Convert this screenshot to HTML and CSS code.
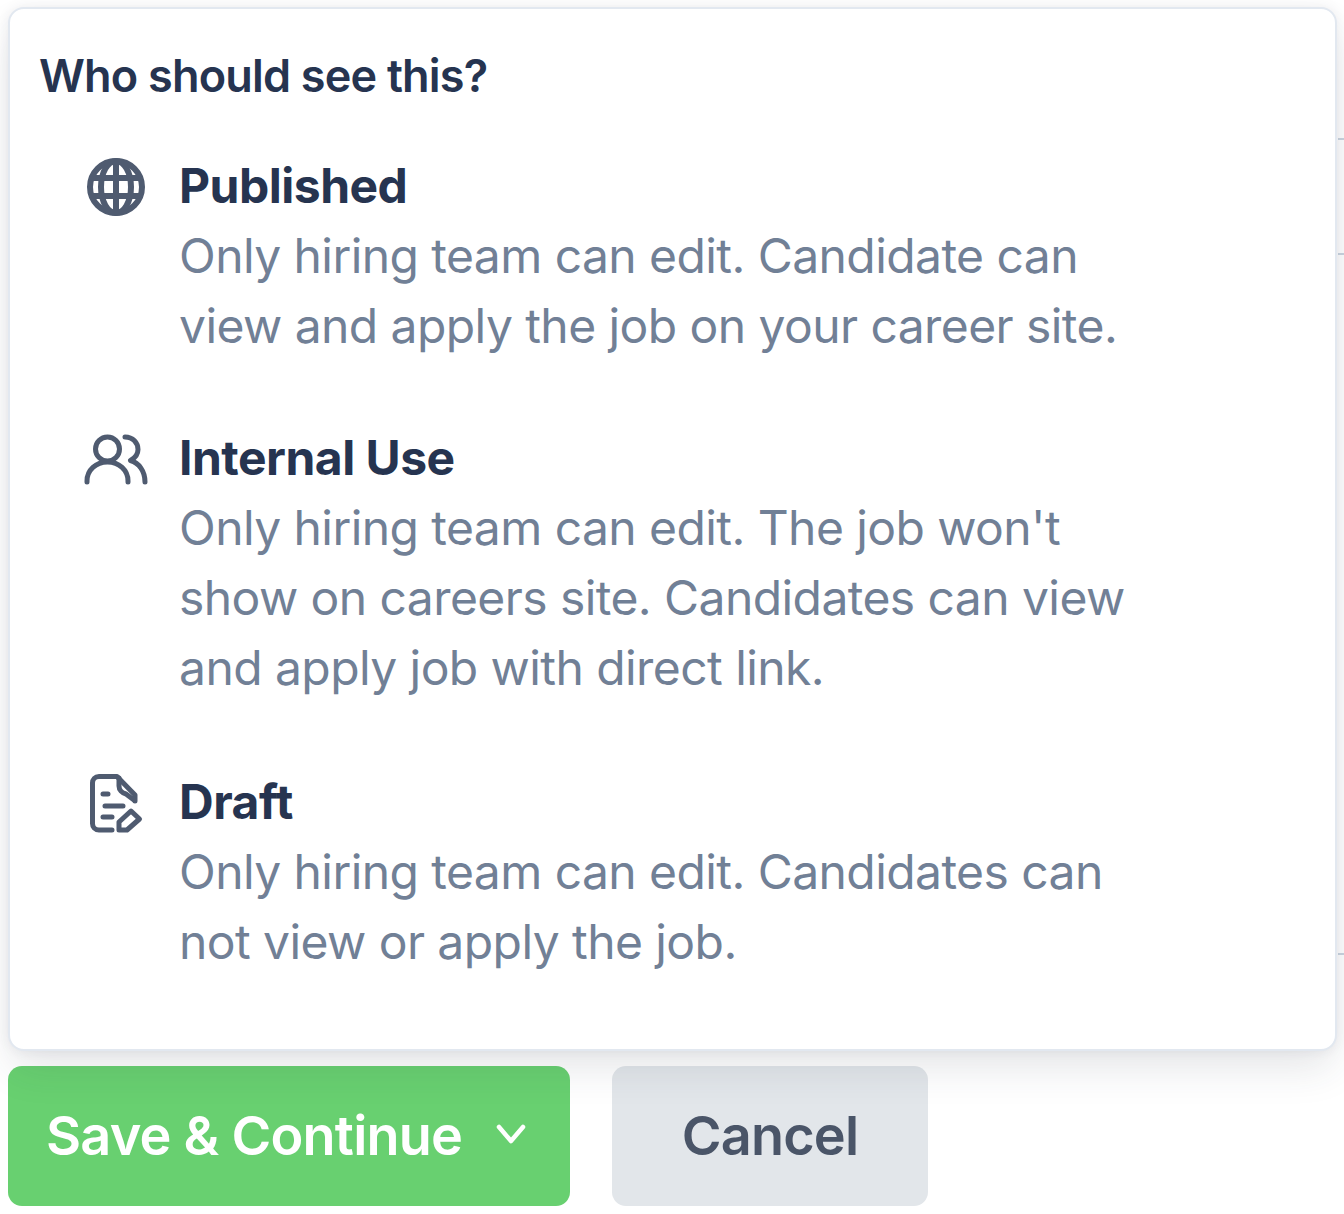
FILE: index.html
```html
<!DOCTYPE html>
<html lang="en">
<head>
    <meta charset="UTF-8">
    <meta name="viewport" content="width=device-width, initial-scale=1.0">
    <title>Who should see this?</title>
    <link rel="stylesheet" href="styles.css">
</head>
<body>
    <div class="top-row">
        <div class="card">
            <h1 class="card-title">Who should see this?</h1>

            <div class="option option-published">
                <svg class="option-icon" viewBox="0 0 68 68" fill="none" stroke="#4f5b70" stroke-width="6">
                    <circle cx="34" cy="34" r="26"/>
                    <ellipse cx="34" cy="34" rx="15" ry="26"/>
                    <path d="M10 25h48M10 43h48M34 8v52"/>
                </svg>
                <div class="option-text">
                    <h2 class="option-name">Published</h2>
                    <p class="option-desc">Only hiring team can edit. Candidate can<br>view and apply the job on your career site.</p>
                </div>
            </div>

            <div class="option option-internal">
                <svg class="option-icon" viewBox="0 0 68 68" fill="none" stroke="#4f5b70" stroke-width="5" stroke-linecap="round" stroke-linejoin="round">
                    <circle cx="25.500" cy="24" r="12"/>
                    <path d="M5 57v-1c0-11 9-19 20.500-19S46 45 46 56v1"/>
                    <path d="M43 12c8 0 13 6 13 12.500 0 4.500-3 8.500-7.500 11C57 38 63 46 63 57"/>
                </svg>
                <div class="option-text">
                    <h2 class="option-name">Internal Use</h2>
                    <p class="option-desc">Only hiring team can edit. The job won't<br>show on careers site. Candidates can view<br>and apply job with direct link.</p>
                </div>
            </div>

            <div class="option option-draft">
                <svg class="option-icon" viewBox="0 0 68 68" fill="none" stroke="#4f5b70" stroke-width="5" stroke-linecap="round" stroke-linejoin="round">
                    <path d="M30 61H17c-4 0-6.500-3-6.500-6.500V14c0-3.500 2.500-6.500 6.500-6.500h18L53 26v6"/>
                    <path d="M37 9v8c0 4 3 7 7 8l8 6"/>
                    <path d="M21 25h5M23 37h18M21 48h9"/>
                    <path d="M37 61v-8l12-11 8.500 8L45 61z"/>
                </svg>
                <div class="option-text">
                    <h2 class="option-name">Draft</h2>
                    <p class="option-desc">Only hiring team can edit. Candidates can<br>not view or apply the job.</p>
                </div>
            </div>
        </div>

        <!-- rows of the page behind the popover, only their ends show -->
        <div class="behind">
            <div class="behind-line line-1"></div>
            <div class="behind-line line-2"></div>
            <div class="behind-line line-3"></div>
        </div>
    </div>

    <div class="actions">
        <button class="btn btn-save">
            Save &amp; Continue
            <svg class="chevron" viewBox="0 0 32 24" fill="none" stroke="#fff" stroke-width="4.500" stroke-linecap="round" stroke-linejoin="round">
                <path d="M4 5l12 14L28 5"/>
            </svg>
        </button>
        <button class="btn btn-cancel">Cancel</button>
    </div>
</body>
</html>
```

FILE: styles.css
```css
* {
    box-sizing: border-box;
}
html, body {
    margin: 0;
    background: #fff;
}
body {
    font-family: Inter, "Liberation Sans", sans-serif;
    height: 1214px;
    overflow: hidden;
    padding-top: 7px;
}
.top-row {
    display: flex;
    padding-left: 8px;
    height: 1044px;
}
.card {
    position: relative;
    z-index: 2;
    width: 1329px;
    height: 1044px;
    flex: none;
    background: #fff;
    border: 2px solid #e2e8f0;
    border-radius: 16px;
    padding: 39px 0 0 29px;
    box-shadow: 0 20px 40px -4px rgba(45, 55, 72, 0.13), 0 0 12px rgba(45, 55, 72, 0.08);
}
.card-title {
    margin: 0;
    font-size: 45px;
    line-height: 56px;
    font-weight: 600;
    color: #263450;
    letter-spacing: -0.8px;
}
.option {
    display: flex;
    align-items: flex-start;
    padding-left: 43px;
}
.option-published {
    margin-top: 47px;
}
.option-internal {
    margin-top: 62px;
}
.option-draft {
    margin-top: 64px;
}
.option-icon {
    width: 68px;
    height: 68px;
    flex: none;
    margin-top: 2px;
}
.option-text {
    margin-left: 29px;
}
.option-name {
    margin: 0;
    font-size: 48px;
    line-height: 70px;
    font-weight: 700;
    color: #263450;
    letter-spacing: -0.5px;
}
.option-desc {
    margin: 0;
    font-size: 48px;
    line-height: 70px;
    font-weight: 400;
    color: #718096;
    letter-spacing: -0.57px;
}
.behind {
    flex: 1;
    display: flex;
    flex-direction: column;
    padding-left: 1px;
}
.behind-line {
    height: 2px;
    background: #cbd5e0;
}
.line-1 {
    margin-top: 131px;
}
.line-2 {
    margin-top: 113px;
}
.line-3 {
    margin-top: 698px;
}
.actions {
    display: flex;
    gap: 42px;
    padding-left: 8px;
    margin-top: 15px;
}
.btn {
    height: 140px;
    padding-bottom: 3px;
    border: none;
    border-radius: 14px;
    font-family: inherit;
    font-size: 54px;
    font-weight: 600;
    letter-spacing: -0.77px;
    display: flex;
    align-items: center;
    cursor: pointer;
}
.btn-save {
    width: 562px;
    padding-left: 38px;
    background: #68d070;
    color: #fff;
}
.chevron {
    width: 32px;
    height: 24px;
    margin-left: 33px;
    margin-top: -2px;
}
.btn-cancel {
    width: 316px;
    justify-content: center;
    background: #e2e6ea;
    color: #4a5568;
}
```
